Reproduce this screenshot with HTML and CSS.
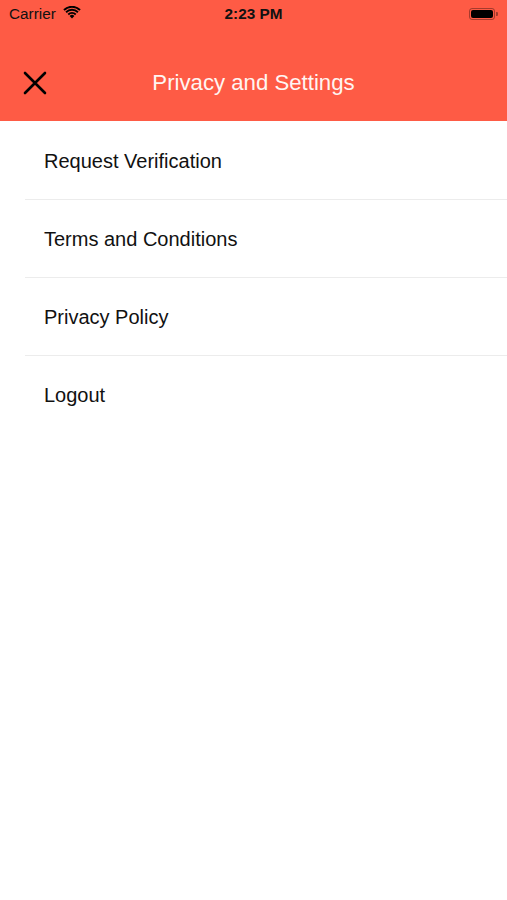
FILE: index.html
```html
<!DOCTYPE html>
<html lang="en">
<head>
    <meta charset="UTF-8">
    <meta name="viewport" content="width=device-width, initial-scale=1.0">
    <title>Privacy and Settings</title>
    <link rel="stylesheet" href="styles.css">
</head>
<body>
    <header class="top">
        <div class="status-bar">
            <div class="status-left">
                <span>Carrier</span>
                <svg class="wifi" width="18" height="13" viewBox="0 0 18 13">
                    <path d="M9 12.5 L6.6 9.9 A3.4 3.4 0 0 1 11.4 9.9 Z" fill="#000"/>
                    <path d="M4.6 7.8 A6.4 6.4 0 0 1 13.4 7.8 L12.1 9.2 A4.5 4.5 0 0 0 5.9 9.2 Z" fill="#000"/>
                    <path d="M2.4 5.5 A9.6 9.6 0 0 1 15.6 5.5 L14.3 6.9 A7.7 7.7 0 0 0 3.7 6.9 Z" fill="#000"/>
                    <path d="M0.3 3.3 A12.6 12.6 0 0 1 17.7 3.3 L16.4 4.7 A10.7 10.7 0 0 0 1.6 4.7 Z" fill="#000"/>
                </svg>
            </div>
            <div class="status-time">2:23 PM</div>
            <div class="status-right">
                <div class="battery"><div class="battery-fill"></div></div>
                <div class="battery-tip"></div>
            </div>
        </div>
        <nav class="nav-bar">
            <button class="close-btn" aria-label="Close">
                <svg width="24" height="24" viewBox="0 0 24 24">
                    <path d="M2 2 L22 22 M22 2 L2 22" stroke="#000" stroke-width="2.6" stroke-linecap="round"/>
                </svg>
            </button>
            <h1 class="nav-title">Privacy and Settings</h1>
        </nav>
    </header>

    <ul class="menu">
        <li class="menu-item">Request Verification</li>
        <li class="menu-item">Terms and Conditions</li>
        <li class="menu-item">Privacy Policy</li>
        <li class="menu-item">Logout</li>
    </ul>
</body>
</html>
```

FILE: styles.css
```css
body {
    margin: 0;
    font-family: "Liberation Sans", Arial, sans-serif;
    background: #fff;
}
.top {
    background-color: #fe5b45;
    height: 121px;
}
.status-bar {
    height: 28px;
    margin-bottom: 16px;
    display: flex;
    align-items: center;
    justify-content: space-between;
    padding: 0 9px;
    position: relative;
}
.status-left {
    display: flex;
    align-items: center;
    gap: 7px;
    font-size: 15.3px;
    color: #111;
}
.wifi {
    margin-top: -3px;
}
.status-time {
    position: absolute;
    left: 0;
    right: 0;
    text-align: center;
    font-size: 15.3px;
    font-weight: bold;
    color: #111;
}
.status-right {
    display: flex;
    align-items: center;
}
.battery {
    width: 26px;
    height: 12px;
    border: 1px solid rgba(0, 0, 0, 0.35);
    border-radius: 3px;
    padding: 1px;
    box-sizing: border-box;
}
.battery-fill {
    width: 100%;
    height: 100%;
    background: #000;
    border-radius: 2px;
}
.battery-tip {
    width: 2px;
    height: 4px;
    background: rgba(0, 0, 0, 0.35);
    border-radius: 0 1px 1px 0;
    margin-left: 1px;
}
.nav-bar {
    height: 77px;
    display: flex;
    align-items: center;
    position: relative;
}
.close-btn {
    background: none;
    border: none;
    padding: 0;
    margin-left: 23px;
    width: 24px;
    height: 24px;
    cursor: pointer;
    position: relative;
    z-index: 1;
}
.nav-title {
    position: absolute;
    left: 0;
    right: 0;
    margin: 0;
    text-align: center;
    font-size: 22.2px;
    font-weight: normal;
    color: #fff5f2;
}
.menu {
    list-style: none;
    margin: 0;
    padding: 1px 0 0;
}
.menu-item {
    height: 75px;
    padding-top: 2px;
    display: flex;
    align-items: center;
    margin-left: 25px;
    padding-left: 19px;
    font-size: 20px;
    color: #111;
    border-bottom: 1px solid #ececec;
}
.menu-item:last-child {
    border-bottom: none;
}
```
